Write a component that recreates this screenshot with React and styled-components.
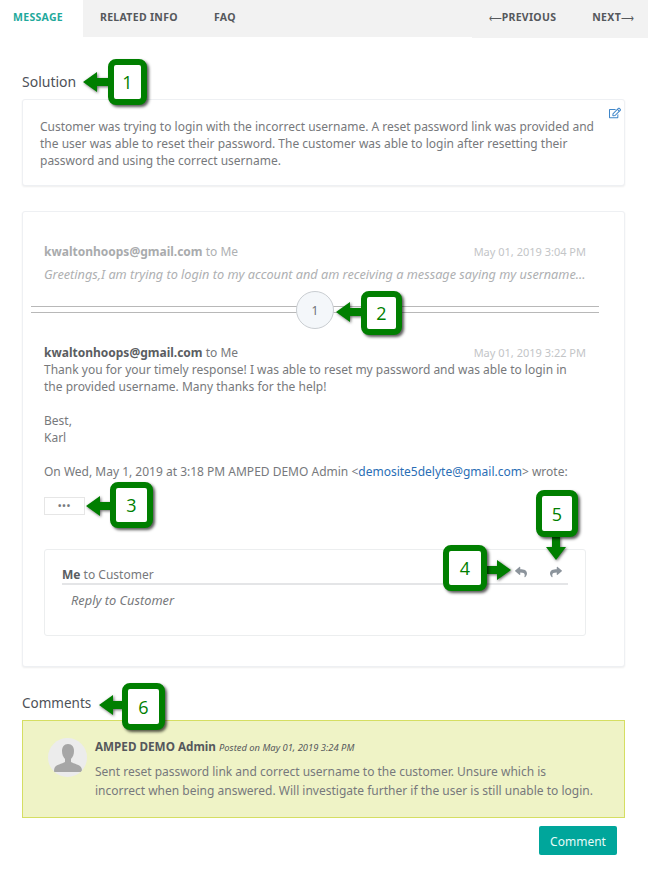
import React from 'react';
import styled, { createGlobalStyle } from 'styled-components';
import { FaRegEdit, FaReply, FaShare } from 'react-icons/fa';

const Global = createGlobalStyle`
  html, body {
    margin: 0;
    padding: 0;
    background: #fff;
  }
  body {
    font-family: "Noto Sans", "Open Sans", sans-serif;
    font-size: 12px;
    line-height: 17px;
    color: #77797c;
  }
`;

const Page = styled.div`
  position: relative;
  width: 648px;
  height: 878px;
  overflow: hidden;
`;

const TabBar = styled.div`
  display: flex;
  height: 37px;
  background: #f2f2f2;
`;

const Tab = styled.div`
  box-sizing: border-box;
  display: flex;
  align-items: center;
  width: ${(p) => p.$width}px;
  padding-left: ${(p) => p.$pad}px;
  height: 34px;
  background: ${(p) => (p.$active ? '#fff' : 'transparent')};
  color: ${(p) => (p.$active ? '#1fa99c' : '#55585c')};
  font-size: 10.5px;
  font-weight: 700;
  letter-spacing: 0.3px;
  white-space: nowrap;
  ${(p) => p.$active && 'height: 37px; padding-bottom: 3px;'}
`;

const Pager = styled.div`
  display: flex;
  margin-left: auto;
  height: 38px;
  padding-left: 17px;
  padding-right: 14px;
  gap: 36px;
  background: #f2f2f2;
`;

const PagerLink = styled.div`
  display: flex;
  align-items: center;
  height: 34px;
  color: #55585c;
  font-size: 10.5px;
  font-weight: 700;
  letter-spacing: 0.3px;
`;

const PagerArrow = styled.span`
  font-size: 9px;
  font-weight: 400;
  letter-spacing: 0;
`;

const Content = styled.div`
  padding: 0 23px 0 22px;
`;

const Heading = styled.h2`
  margin: 0;
  height: 17px;
  font-size: 14px;
  line-height: 17px;
  font-weight: 400;
  color: #4d5157;
`;

const SolutionHeading = styled(Heading)`
  margin-top: 36px;
`;

const Card = styled.div`
  position: relative;
  box-sizing: border-box;
  background: #fff;
  border: 1px solid #eef0f3;
  border-radius: 3px;
  box-shadow: 0 1px 2px rgba(0, 0, 0, 0.07);
`;

const SolutionCard = styled(Card)`
  height: 87px;
  margin-top: 9px;
  padding: 18px 17px 0;
`;

const EditIcon = styled(FaRegEdit)`
  position: absolute;
  top: 7px;
  right: 3px;
  width: 12px;
  height: 12px;
  color: #3f86c9;
`;

const ThreadCard = styled(Card)`
  height: 456px;
  margin-top: 25px;
  padding: 31px 0 0;
`;

const Message = styled.div`
  padding: 0 38px 0 21px;
  margin-top: ${(p) => p.$top || 0}px;
  color: ${(p) => (p.$faded ? '#aeb0b2' : '#77797c')};
`;

const MessageHead = styled.div`
  display: flex;
  justify-content: space-between;
  align-items: baseline;
`;

const Sender = styled.b`
  font-weight: 700;
  color: ${(p) => (p.$faded ? '#a9abad' : '#5a5d61')};
`;

const Stamp = styled.span`
  font-size: 11px;
  color: #c3c5c7;
`;

const Snippet = styled.div`
  margin-top: 6px;
  font-size: 12.7px;
  font-style: italic;
  white-space: nowrap;
`;

const Divider = styled.div`
  display: flex;
  align-items: center;
  justify-content: center;
  position: relative;
  height: 40px;
  margin: 7px 25px 0 8px;
  &::before {
    content: '';
    position: absolute;
    left: 0;
    right: 0;
    top: 16px;
    height: 5px;
    border-top: 1px solid #b8b8b8;
    border-bottom: 1px solid #b8b8b8;
  }
`;

const Count = styled.div`
  position: relative;
  box-sizing: border-box;
  display: flex;
  align-items: center;
  justify-content: center;
  width: 38px;
  height: 38px;
  border: 1px solid #c9cdd1;
  border-radius: 50%;
  background: #f4f7fa;
  color: #6f7276;
  font-size: 12px;
`;

const Paragraph = styled.p`
  margin: 0 0 17px;
`;

const Link = styled.span`
  color: #2a6eb5;
`;

const Ellipsis = styled.div`
  box-sizing: border-box;
  display: flex;
  align-items: center;
  justify-content: center;
  width: 41px;
  height: 18px;
  border: 1px solid #e6e6e6;
  color: #77797c;
  font-size: 9px;
  font-weight: 700;
  letter-spacing: 1px;
  line-height: 10px;
`;

const ReplyBox = styled.div`
  box-sizing: border-box;
  height: 87px;
  margin: 34px 38px 0 21px;
  padding: 17px 17px 0 17px;
  border: 1px solid #eceeef;
  border-radius: 3px;
`;

const ReplyHead = styled.div`
  display: flex;
  align-items: flex-end;
  height: 16px;
  border-bottom: 2px solid #e4e5e7;
  color: #77797c;
`;

const ReplyActions = styled.div`
  display: flex;
  align-items: center;
  gap: 23px;
  margin-left: auto;
  margin-right: 6px;
  margin-bottom: 5px;
  color: #8c949c;
`;

const ReplyInput = styled.div`
  padding: 7px 0 0 9px;
  font-size: 12.8px;
  font-style: italic;
  color: #77797c;
`;

const CommentsHeading = styled(Heading)`
  margin-top: 28px;
  font-size: 13.5px;
`;

const CommentBox = styled.div`
  box-sizing: border-box;
  display: flex;
  gap: 8px;
  height: 98px;
  margin-top: 8px;
  padding: 17px 28px 0 25px;
  background: #eff3c6;
  border: 1px solid #d5de62;
`;

const Avatar = styled.div`
  flex: none;
  display: flex;
  align-items: flex-end;
  justify-content: center;
  box-sizing: border-box;
  width: 39px;
  height: 39px;
  padding-bottom: 5px;
  border-radius: 50%;
  background: #ececec;
  overflow: hidden;
`;

const CommentBody = styled.div`
  flex: 1;
  color: #77797c;
`;

const CommentHead = styled.div`
  height: 20px;
  white-space: nowrap;
  margin-bottom: 5px;
`;

const Author = styled.b`
  font-weight: 700;
  font-size: 11.7px;
  color: #55585c;
`;

const Posted = styled.i`
  font-size: 9.4px;
  color: #55585c;
`;

const CommentText = styled.div`
  font-size: 12px;
  line-height: 18.5px;
`;

const Actions = styled.div`
  display: flex;
  justify-content: flex-end;
  margin-top: 8px;
  padding-right: 8px;
`;

const CommentButton = styled.div`
  display: flex;
  align-items: center;
  justify-content: center;
  width: 78px;
  height: 29px;
  padding-top: 1px;
  box-sizing: border-box;
  background: #00a69b;
  border-radius: 2px;
  color: #e8fbf9;
  font-size: 12px;
`;

/* numbered green markers laid over the screenshot */
const Marker = styled.div`
  position: absolute;
  left: ${(p) => p.$x}px;
  top: ${(p) => p.$y}px;
  box-sizing: border-box;
  display: flex;
  align-items: center;
  justify-content: center;
  width: ${(p) => p.$w}px;
  height: ${(p) => p.$h}px;
  background: #fff;
  border: 6px solid #007f00;
  border-radius: 8px;
  box-shadow: 2px 2px 3px rgba(0, 0, 0, 0.65);
  color: #007f00;
  font-family: "Open Sans", "Noto Sans", sans-serif;
  font-size: 18px;
  font-weight: 400;
  line-height: 1;
`;

const Arrow = styled.svg`
  position: absolute;
  left: ${(p) => p.$x}px;
  top: ${(p) => p.$y}px;
  overflow: visible;
  filter: drop-shadow(1.5px 1.5px 1.5px rgba(0, 0, 0, 0.6));
`;

function ArrowLeft({ x, y }) {
  return (
    <Arrow $x={x} $y={y} width="27" height="20" viewBox="0 0 27 20">
      <path d="M0 10 L14 0 L14 6 L27 6 L27 14 L14 14 L14 20 Z" fill="#007f00" />
    </Arrow>
  );
}

function ArrowRight({ x, y }) {
  return (
    <Arrow $x={x} $y={y} width="24" height="20" viewBox="0 0 24 20">
      <path d="M24 10 L10 0 L10 6 L0 6 L0 14 L10 14 L10 20 Z" fill="#007f00" />
    </Arrow>
  );
}

function ArrowDown({ x, y }) {
  return (
    <Arrow $x={x} $y={y} width="20" height="24" viewBox="0 0 20 24">
      <path d="M10 24 L0 11 L6 11 L6 0 L14 0 L14 11 L20 11 Z" fill="#007f00" />
    </Arrow>
  );
}

export default function App() {
  return (
    <Page>
      <Global />
      <TabBar>
        <Tab $active $width={83} $pad={13}>MESSAGE</Tab>
        <Tab $width={114} $pad={17}>RELATED INFO</Tab>
        <Tab $width={48} $pad={17}>FAQ</Tab>
        <Pager>
          <PagerLink><PagerArrow>⟵</PagerArrow>PREVIOUS</PagerLink>
          <PagerLink>NEXT<PagerArrow>⟶</PagerArrow></PagerLink>
        </Pager>
      </TabBar>
      <Content>
        <SolutionHeading>Solution</SolutionHeading>
        <SolutionCard>
          <EditIcon />
          Customer was trying to login with the incorrect username. A reset password link was provided and
          the user was able to reset their password. The customer was able to login after resetting their
          password and using the correct username.
        </SolutionCard>
        <ThreadCard>
          <Message $faded>
            <MessageHead>
              <span><Sender $faded>kwaltonhoops@gmail.com</Sender> to Me</span>
              <Stamp>May 01, 2019 3:04 PM</Stamp>
            </MessageHead>
            <Snippet>Greetings,I am trying to login to my account and am receiving a message saying my username...</Snippet>
          </Message>
          <Divider>
            <Count>1</Count>
          </Divider>
          <Message $top={14}>
            <MessageHead>
              <span><Sender>kwaltonhoops@gmail.com</Sender> to Me</span>
              <Stamp>May 01, 2019 3:22 PM</Stamp>
            </MessageHead>
            <Paragraph>
              Thank you for your timely response! I was able to reset my password and was able to login in the provided username. Many thanks for the help!
            </Paragraph>
            <Paragraph>Best,<br />Karl</Paragraph>
            <Paragraph>
              On Wed, May 1, 2019 at 3:18 PM AMPED DEMO Admin &lt;<Link>demosite5delyte@gmail.com</Link>&gt; wrote:
            </Paragraph>
            <Ellipsis>•••</Ellipsis>
          </Message>
          <ReplyBox>
            <ReplyHead>
              <span><Sender>Me</Sender> to Customer</span>
              <ReplyActions>
                <FaReply size={12} />
                <FaShare size={12} />
              </ReplyActions>
            </ReplyHead>
            <ReplyInput>Reply to Customer</ReplyInput>
          </ReplyBox>
        </ThreadCard>
        <CommentsHeading>Comments</CommentsHeading>
        <CommentBox>
          <Avatar>
            <svg width="28" height="28" viewBox="0 0 28 28">
              <path d="M14 0c-4 0-6 3-6 7 0 3 1 6 3 8v3c-3 2-9 2.500-10.500 6-.3 1-.5 2-.5 3.500 0 .3.200.5.500.5h27c.3 0 .5-.2.500-.5 0-1.500-.2-2.500-.5-3.500-1.500-3.500-7.500-4-10.500-6v-3c2-2 3-5 3-8 0-4-2-7-6-7z" fill="#a6a6a6" />
            </svg>
          </Avatar>
          <CommentBody>
            <CommentHead>
              <Author>AMPED DEMO Admin</Author> <Posted>Posted on May 01, 2019 3:24 PM</Posted>
            </CommentHead>
            <CommentText>
              Sent reset password link and correct username to the customer. Unsure which is incorrect when being answered. Will investigate further if the user is still unable to login.
            </CommentText>
          </CommentBody>
        </CommentBox>
        <Actions>
          <CommentButton>Comment</CommentButton>
        </Actions>
      </Content>

      <ArrowLeft x={83} y={72} />
      <Marker $x={108} $y={59} $w={39} $h={46}>1</Marker>
      <ArrowLeft x={336} y={302} />
      <Marker $x={361} $y={291} $w={41} $h={44}>2</Marker>
      <ArrowLeft x={86} y={496} />
      <Marker $x={110} $y={482} $w={43} $h={46}>3</Marker>
      <ArrowRight x={487} y={560} />
      <Marker $x={443} $y={545} $w={44} $h={46}>4</Marker>
      <ArrowDown x={546} y={536} />
      <Marker $x={536} $y={490} $w={42} $h={47}>5</Marker>
      <ArrowLeft x={99} y={695} />
      <Marker $x={122} $y={683} $w={43} $h={47}>6</Marker>
    </Page>
  );
}
